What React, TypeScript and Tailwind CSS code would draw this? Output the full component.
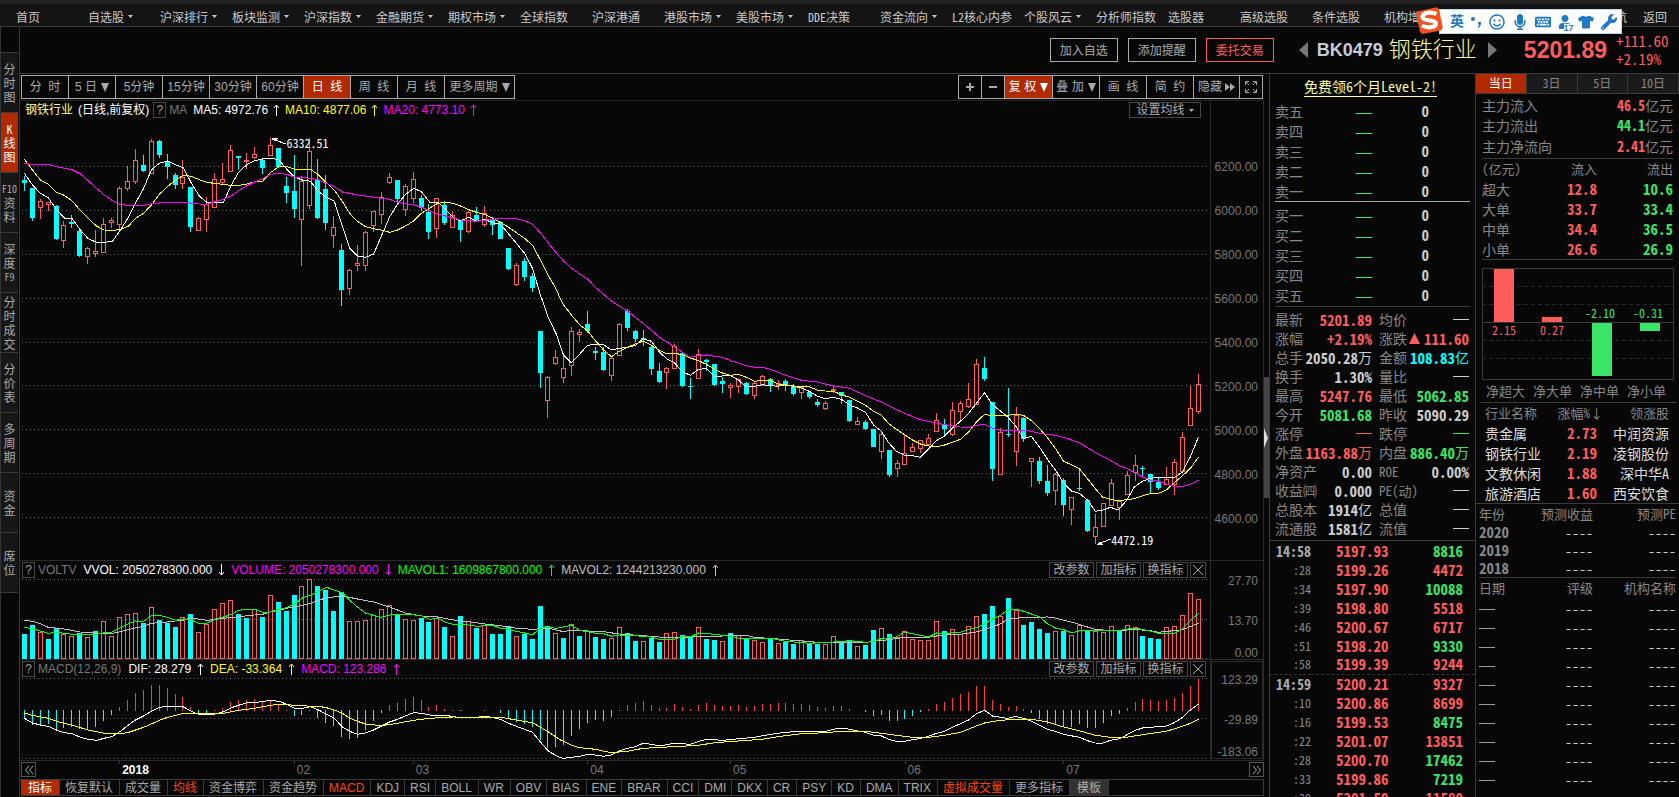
import type { ReactNode } from 'react';
import { FaKeyboard, FaMicrophone, FaRegSmile, FaTshirt, FaUser, FaWrench } from 'react-icons/fa';
import { clsx } from 'clsx';

const RED = '#ff5c5c';
const CYAN = '#00ffff';
const GREEN = '#3ae467';

const MONO = "font-['Noto_Sans_Mono_CJK_SC','Noto_Sans_CJK_SC',monospace]";
const ARIAL = "font-['Liberation_Sans','Noto_Sans_CJK_SC',sans-serif]";

// ---------- chart data ----------
// r = up, c = down, followed by high, body top, body bottom, low
const CANDLES = `
c528,540,549,573 c564,564,654,663 r598,604,620,656 r606,606,611,632 c615,618,716,720 r663,676,721,744
c646,665,672,684 c690,693,768,771 r741,744,768,791 r690,752,758,771 r654,673,757,758 r654,661,667,684
r558,563,673,687 r499,542,563,573 r448,481,542,552 c465,495,512,516 r417,424,520,522 c420,424,465,475
c462,484,500,537 c519,525,555,567 r480,531,550,567 c561,561,681,696 r651,654,691,692 r591,612,658,696
r519,538,622,624 r489,536,545,552 r436,451,514,516 c468,468,474,510 r460,480,484,508 r442,463,471,478
c476,479,504,521 r414,436,466,468 c444,444,500,503 c531,558,579,609 c465,573,627,654 r528,542,658,797
r414,454,616,627 c476,541,654,656 c525,567,669,690 r648,682,706,744 c732,750,870,918 r806,811,863,885
r735,790,795,813 r693,697,794,813 r633,634,676,696 r576,590,643,672 r519,531,546,551 c540,540,597,608
r552,557,628,648 r516,538,593,608 c585,594,625,632 c612,636,696,717 r594,595,685,714 c603,615,669,674
r633,646,682,684 c660,664,690,726 r633,637,694,700 c621,645,660,662 r618,640,673,680 c651,660,675,705
c664,666,716,717 c744,744,807,810 r789,796,851,857 c774,783,831,843 c820,828,864,876 c993,993,1118,1164
r1128,1132,1199,1254 r1050,1072,1088,1095 r1065,1105,1132,1149 r981,993,1094,1128 r987,996,1001,1026
c933,972,992,998 c1041,1053,1058,1080 c1041,1056,1109,1113 r1070,1074,1124,1143 r969,972,1064,1065
c927,933,984,993 c990,993,1016,1026 c990,1014,1017,1038 c1035,1041,1107,1125 c1089,1113,1146,1149
r1101,1105,1117,1167 r1033,1039,1105,1107 c1059,1059,1158,1161 c1134,1158,1161,1197 r1047,1063,1135,1137
c1077,1080,1086,1113 c1092,1092,1155,1158 c1131,1143,1152,1179 r1149,1155,1160,1194 r1134,1138,1157,1179
c1146,1149,1182,1185 r1143,1150,1184,1197 r1125,1129,1154,1158 c1134,1137,1158,1176 r1140,1149,1154,1170
c1137,1143,1158,1173 c1152,1158,1182,1188 r1158,1162,1175,1197 c1176,1176,1191,1197 c1197,1206,1215,1221
r1203,1210,1223,1230 r1155,1167,1169,1179 c1176,1176,1188,1212 c1200,1200,1263,1267 r1251,1264,1271,1275
c1260,1266,1287,1290 c1287,1287,1341,1341 r1296,1303,1352,1377 c1350,1350,1425,1431 r1380,1390,1403,1431
r1302,1360,1393,1395 r1329,1342,1352,1356 r1320,1321,1343,1359 r1302,1315,1331,1335 r1239,1261,1292,1293
c1257,1272,1287,1308 r1206,1231,1301,1308 r1203,1210,1232,1263 r1149,1198,1217,1224 r1077,1093,1211,1213
c1071,1104,1137,1143 c1206,1206,1407,1443 r1284,1297,1423,1425 c1164,1301,1305,1311 r1221,1244,1352,1398
c1250,1254,1317,1326 r1374,1375,1382,1461 c1371,1383,1443,1452 c1395,1443,1479,1488 r1420,1423,1469,1515
c1434,1440,1515,1548 r1490,1492,1526,1575 c1407,1464,1467,1473 c1500,1500,1593,1596 r1542,1581,1607,1631
r1509,1510,1577,1577 r1437,1450,1514,1514 r1504,1504,1522,1560 r1413,1426,1483,1485 r1365,1396,1415,1443
c1397,1405,1408,1428 c1422,1422,1446,1479 c1434,1446,1464,1470 r1401,1437,1451,1455 r1377,1387,1451,1485
r1296,1312,1412,1415 r1158,1225,1276,1278 r1122,1153,1232,1242`;

const MA5 =
    '68,520 91,555 113,580 135,593 158,628 180,654 203,657 225,690 247,716 270,727 292,727 315,724 337,690 360,651 379,610 402,565 424,510 446,490 469,483 491,494 514,504 536,550 558,588 581,609 603,608 626,606 648,555 668,517 690,495 713,482 735,477 757,475 780,479 802,506 825,532 847,540 869,544 892,575 914,592 936,604 950,650 959,680 979,744 1001,768 1023,772 1046,762 1068,708 1091,651 1113,612 1135,584 1158,565 1180,575 1203,606 1225,606 1247,627 1270,654 1289,663 1312,652 1334,664 1357,658 1379,668 1401,672 1424,702 1446,730 1469,760 1491,805 1513,885 1536,955 1558,1003 1568,1036 1578,1065 1600,1088 1623,1063 1645,1036 1667,1033 1690,1034 1712,1050 1734,1045 1757,1042 1779,1036 1801,1016 1824,1024 1846,1056 1869,1078 1888,1088 1911,1115 1933,1126 1956,1108 1978,1106 2001,1130 2023,1128 2045,1126 2067,1140 2090,1160 2112,1159 2135,1154 2177,1159 2199,1154 2222,1159 2244,1164 2266,1174 2288,1188 2311,1196 2334,1192 2356,1198 2379,1215 2401,1224 2423,1237 2446,1275 2468,1294 2488,1328 2510,1354 2533,1366 2555,1367 2577,1372 2600,1347 2622,1322 2645,1308 2667,1284 2689,1264 2712,1240 2734,1210 2757,1178 2779,1214 2821,1250 2843,1277 2866,1315 2888,1309 2910,1340 2933,1378 2955,1410 2978,1448 3000,1473 3022,1480 3045,1500 3067,1534 3087,1531 3109,1522 3131,1530 3154,1502 3176,1461 3199,1444 3221,1435 3244,1432 3266,1434 3288,1433 3311,1416 3333,1370 3356,1310';
const MA10 =
    '68,478 91,510 113,540 135,553 158,577 180,586 203,604 225,632 247,655 270,678 292,690 315,691 337,689 360,678 379,655 402,640 424,615 446,583 469,560 491,540 514,526 536,529 558,539 581,548 603,550 626,554 648,556 668,556 690,553 713,545 735,544 757,518 780,500 802,499 825,508 869,508 892,525 914,548 936,570 959,605 979,640 1001,664 1023,680 1046,686 1068,690 1091,697 1113,690 1135,678 1158,663 1180,640 1203,625 1225,610 1247,607 1270,610 1289,618 1312,629 1334,637 1357,643 1379,655 1401,667 1424,682 1446,698 1469,715 1491,736 1513,780 1536,828 1558,868 1568,895 1578,915 1600,945 1623,974 1645,992 1667,1022 1690,1050 1712,1070 1734,1054 1757,1042 1779,1032 1801,1024 1824,1036 1846,1051 1869,1062 1888,1060 1911,1064 1933,1074 1956,1082 1978,1093 2001,1108 2023,1119 2045,1126 2067,1123 2090,1132 2112,1144 2135,1141 2157,1140 2177,1152 2199,1155 2222,1158 2266,1160 2288,1170 2311,1173 2334,1174 2356,1184 2379,1192 2401,1204 2423,1216 2446,1234 2468,1246 2488,1271 2510,1288 2533,1304 2555,1320 2577,1332 2600,1338 2622,1340 2645,1335 2667,1327 2689,1318 2712,1296 2734,1266 2757,1243 2779,1248 2801,1246 2821,1246 2843,1243 2866,1246 2888,1262 2910,1285 2933,1313 2955,1345 2978,1384 3000,1394 3022,1406 3045,1436 3067,1466 3087,1491 3109,1498 3131,1503 3154,1499 3176,1496 3199,1487 3221,1481 3244,1480 3266,1470 3288,1448 3311,1427 3333,1405 3356,1371';
const MA20 =
    '68,491 91,493 135,493 158,500 203,510 225,522 247,542 270,565 292,585 315,602 337,614 360,616 402,616 424,611 469,607 514,607 558,612 581,613 603,604 626,598 648,587 668,572 690,558 713,546 735,536 757,523 780,520 802,523 825,531 869,535 892,540 914,550 936,560 959,576 1001,585 1046,592 1091,598 1113,607 1158,615 1180,621 1203,633 1225,642 1247,648 1289,660 1334,664 1379,658 1401,655 1446,656 1469,662 1491,673 1513,699 1536,730 1560,762 1578,783 1600,805 1623,822 1645,837 1667,862 1712,903 1757,934 1801,970 1846,1012 1888,1040 1911,1057 1933,1072 1956,1067 1978,1065 2023,1072 2045,1082 2067,1089 2090,1097 2112,1102 2135,1102 2157,1108 2199,1126 2244,1141 2288,1146 2334,1158 2379,1165 2423,1187 2468,1206 2510,1229 2555,1250 2577,1259 2600,1264 2645,1274 2689,1281 2712,1282 2734,1276 2757,1273 2779,1285 2801,1291 2866,1291 2888,1294 2910,1300 2955,1306 2978,1312 3000,1320 3022,1328 3067,1358 3109,1381 3136,1398 3154,1404 3176,1418 3199,1431 3221,1440 3244,1444 3266,1453 3288,1459 3311,1459 3333,1453 3356,1440';

const VOLUMES = `
c321 c294 r316 c336 c304 r322 r328 c318 r331 c312 r283 r328 r271 r262 r259 c288 r241 c279 c288 c300
r271 c261 r316 r292 r247 r229 r220 c261 c273 r247 c270 r205 c225 c252 c204 r178 r157 c177 c189 c252
c195 r283 r283 r280 r265 r247 r235 c264 r277 r280 c273 c285 r274 c300 r328 c267 r283 c303 r295 c321
c321 c298 r328 c321 c336 c237 c297 r319 c333 r292 c327 r313 c330 c336 r334 r301 c318 c342 r343 c333
c345 r319 r316 c324 c328 r301 c336 c339 r343 c318 r325 c336 r340 r346 c336 r349 c345 c351 r340 c350
c350 r352 r328 c342 c339 r358 c354 c309 r304 c321 r331 r313 r337 r340 r340 r283 c312 r307 r322 r298
r268 c261 c237 r268 c213 r250 c294 c285 c306 c318 r313 c312 r325 r295 c312 r313 r316 r298 c310 r295
r301 c327 c333 c336 r301 r298 r265 r199 r217`;

const MAVOL1 =
    '68,301 91,305 135,319 158,316 180,319 203,322 270,322 292,317 315,315 337,302 360,290 379,282 402,283 424,266 446,265 469,271 491,280 514,276 536,279 558,290 581,288 603,276 626,270 648,262 668,250 690,247 713,247 735,256 757,255 780,247 802,242 825,231 847,213 869,205 892,193 914,181 936,189 959,197 979,220 1001,240 1023,258 1046,265 1068,271 1091,264 1135,261 1180,266 1203,277 1225,274 1247,286 1270,292 1312,294 1334,298 1379,295 1401,303 1424,307 1446,313 1491,323 1513,304 1536,301 1558,304 1600,295 1623,310 1667,319 1690,320 1712,328 1734,324 1779,326 1801,328 1824,330 1846,337 1888,337 1911,328 1933,330 1956,318 2001,322 2045,328 2067,333 2157,333 2199,343 2266,349 2334,345 2379,341 2423,346 2446,344 2468,335 2510,330 2533,316 2555,320 2600,330 2622,318 2645,322 2667,316 2689,316 2712,307 2734,302 2757,290 2779,276 2801,265 2821,250 2843,246 2866,253 2910,269 2933,290 2955,303 2978,308 3000,317 3022,312 3087,310 3109,310 3136,310 3176,303 3221,312 3244,319 3288,319 3311,305 3333,280 3356,259';
const MAVOL2 =
    '68,280 91,283 113,290 135,301 180,306 225,315 270,319 315,319 337,314 379,303 402,298 424,289 469,285 514,279 536,273 581,280 626,274 668,269 713,264 735,262 757,255 780,250 802,244 847,235 869,229 892,220 914,212 959,207 1001,216 1046,225 1091,240 1135,258 1180,267 1225,270 1270,279 1312,284 1357,291 1401,296 1446,304 1491,307 1536,304 1578,314 1600,310 1690,314 1734,321 1801,326 1869,332 1933,330 2023,327 2090,325 2112,331 2177,336 2244,342 2288,346 2423,347 2446,343 2488,338 2533,331 2600,331 2645,323 2689,322 2734,315 2757,308 2779,299 2801,291 2821,277 2866,271 2933,270 2955,273 3000,285 3045,300 3067,307 3109,311 3136,311 3176,307 3221,311 3244,316 3311,308 3356,289';

const MACD_BARS = `
c576 c594 c594 c591 c606 c603 c600 c606 c606 c600 c582 c564 r540 r519 r498 r489 r474 r474 r483 r501
r510 r540 c557 c558 r549 r543 r525 r519 r519 r516 r525 r522 r531 r549 c567 c564 c551 c573 c588 c597
c630 c636 c633 c609 c582 c558 r534 r528 r516 r510 r519 r540 r534 r546 r549 c552 - - r549 -
c558 c576 c585 c591 c600 c639 c663 c660 c654 c627 c606 c588 c579 c582 c570 r549 r534 r528 r522 r534
r543 r543 r531 r540 r546 r534 r528 r534 r537 r537 r534 r540 r537 r531 r531 r528 r528 r531 r531 r534
r540 r543 r537 r537 r546 - c555 c567 c564 c582 c582 c576 c567 c555 r546 r531 r525 r513 r501 r495
r477 r477 r519 r531 r540 r537 r546 c558 c576 c591 c594 c600 c600 c591 c603 c603 c588 c567 c560 r543
r525 r516 r519 r522 r519 r513 r498 r477 r456`;

const DIF =
    '68,574 91,588 113,594 135,598 158,609 180,617 203,620 225,631 247,637 270,640 292,634 315,628 337,613 360,594 379,579 402,567 424,553 446,541 469,538 514,540 536,553 558,563 581,564 603,561 626,554 648,542 668,535 690,528 735,524 757,520 780,523 802,531 825,544 847,544 869,539 892,549 914,562 936,574 959,600 979,613 1001,622 1023,618 1046,609 1068,597 1091,585 1113,577 1135,567 1158,557 1180,559 1203,564 1247,564 1270,570 1334,571 1357,568 1379,571 1401,577 1424,589 1446,598 1491,616 1513,645 1536,673 1568,692 1578,694 1623,688 1645,682 1667,684 1690,688 1712,684 1734,672 1757,664 1779,659 1801,649 1824,652 1846,657 1888,649 1933,652 1956,643 1978,637 2023,640 2112,631 2157,622 2199,616 2244,613 2311,613 2334,607 2356,603 2379,607 2401,612 2423,616 2446,625 2468,627 2488,637 2510,643 2533,643 2577,634 2600,628 2622,619 2645,613 2667,601 2689,590 2712,579 2734,560 2757,550 2779,567 2801,571 2821,574 2843,568 2866,574 2888,583 2910,594 2933,607 2955,613 2978,622 3022,631 3045,641 3067,648 3087,649 3109,640 3136,635 3154,624 3176,611 3199,603 3266,597 3288,587 3311,571 3333,549 3356,531';
const DEA =
    '68,558 91,565 135,574 158,583 203,595 247,609 292,619 337,621 360,616 402,601 424,591 446,580 469,571 491,565 514,559 626,559 668,550 713,544 757,535 780,532 802,532 825,536 892,538 914,542 936,549 959,559 979,573 1001,583 1023,591 1068,596 1113,589 1158,580 1203,574 1270,570 1401,571 1446,579 1491,587 1513,601 1536,615 1568,638 1600,655 1623,662 1667,667 1712,677 1757,673 1801,664 1869,660 1956,655 2001,647 2067,642 2135,637 2177,629 2244,620 2311,617 2356,613 2423,613 2468,619 2510,625 2555,631 2600,631 2645,625 2689,616 2734,597 2757,588 2801,580 2843,577 2888,577 2933,585 2978,600 3022,611 3067,625 3109,631 3136,631 3154,631 3199,623 3266,613 3311,598 3333,589 3356,576';

const WIDTH = 1190;
const barX = (i: number) => Math.floor(4.3 + 7.934 * i) + 0.5;
const tokens = (s: string) => s.trim().split(/\s+/);

// series points are stored at 2.8 x 3 units per plot unit
function toPoints(series: string, offset: number) {
    return series
        .split(' ')
        .map((p) => {
            const [x, y] = p.split(',').map(Number);
            return `${(x / 2.8 - 20).toFixed(1)},${(y / 3 - offset).toFixed(1)}`;
        })
        .join(' ');
}

function Line({ series, offset, color }: { series: string; offset: number; color: string }) {
    return <polyline points={toPoints(series, offset)} fill="none" stroke={color} strokeWidth="1" />;
}

function Grid({ rows }: { rows: number[] }) {
    return (
        <>
            {rows.map((y) => (
                <line key={y} x1="2" x2={WIDTH} y1={y + 0.5} y2={y + 0.5} stroke="#5a5a5a" strokeDasharray="1 3" />
            ))}
        </>
    );
}

function Plot({ height, children }: { height: number; children: ReactNode }) {
    return (
        <svg
            className="block w-full h-full"
            viewBox={`0 0 ${WIDTH} ${height}`}
            preserveAspectRatio="none"
            shapeRendering="crispEdges"
        >
            {children}
        </svg>
    );
}

function PriceChart() {
    return (
        <Plot height={441}>
            <Grid rows={[47, 91, 135, 179, 223, 266, 310, 354, 398]} />
            {tokens(CANDLES).map((t, i) => {
                const [high, top, bottom, low] = t.slice(1).split(',').map((v) => Math.round(Number(v) / 3) - 119);
                const x = barX(i);
                const h = Math.max(bottom - top, 1);
                if (t[0] === 'c') {
                    return (
                        <g key={i} fill={CYAN}>
                            <rect x={x - 0.5} y={high} width="1" height={low - high} />
                            <rect x={x - 2.5} y={top} width="5" height={h} />
                        </g>
                    );
                }
                return (
                    <g key={i} fill="none" stroke={RED}>
                        <path d={`M${x} ${high}V${top}M${x} ${bottom}V${low}`} />
                        <rect x={x - 2} y={top + 0.5} width="4" height={h - 0.5} />
                    </g>
                );
            })}
            <Line series={MA5} offset={119} color="#ffffff" />
            <Line series={MA10} offset={119} color="#ffff00" />
            <Line series={MA20} offset={119} color="#ff00ff" />
            {/* high / low pointers */}
            <path d="M252 20l14 5M1078 425l13-5" stroke="#fff" fill="none" />
            <path d="M251 19l7 0l-3 4zM1076 426l7 0l-3 -4z" fill="#fff" />
        </Plot>
    );
}

function VolumeChart() {
    return (
        <Plot height={80}>
            <Grid rows={[0, 40, 79]} />
            {tokens(VOLUMES).map((t, i) => {
                const top = Math.round(Number(t.slice(1)) / 3) - 52;
                const x = barX(i);
                return t[0] === 'c' ? (
                    <rect key={i} x={x - 2.5} y={top} width="5" height={80 - top} fill={CYAN} />
                ) : (
                    <rect key={i} x={x - 2} y={top + 0.5} width="4" height={79 - top} fill="none" stroke={RED} />
                );
            })}
            <Line series={MAVOL2} offset={52} color="#c0c0c0" />
            <Line series={MAVOL1} offset={52} color="#00ff00" />
        </Plot>
    );
}

function MacdChart() {
    return (
        <Plot height={82}>
            <Grid rows={[0, 40, 80]} />
            {tokens(MACD_BARS).map((t, i) => {
                if (t === '-') return null;
                const end = Math.round(Number(t.slice(1)) / 3) - 151;
                const up = t[0] === 'r';
                return (
                    <rect
                        key={i}
                        x={barX(i) - 0.5}
                        y={up ? end : 32}
                        width="1"
                        height={Math.max(up ? 33 - end : end - 32, 1)}
                        fill={up ? '#ff3c3c' : CYAN}
                    />
                );
            })}
            <Line series={DIF} offset={151} color="#ffffff" />
            <Line series={DEA} offset={151} color="#ffff00" />
        </Plot>
    );
}

// ---------- small pieces ----------
function Caret() {
    return (
        <svg className="w-[5px] h-[3px] ml-1 shrink-0" viewBox="0 0 5 3" fill="currentColor">
            <path d="M0 0h5L2.5 3z" />
        </svg>
    );
}

function Triangle({ className }: { className?: string }) {
    return (
        <svg className={clsx('w-2 h-[9px] shrink-0', className)} viewBox="0 0 8 9" fill="currentColor">
            <path d="M0 0h8L4 9z" />
        </svg>
    );
}

function Arrow({ down, className = 'mx-[5px]' }: { down?: boolean; className?: string }) {
    return (
        <svg
            className={clsx('w-[7px] h-3 shrink-0', className, down && 'rotate-180')}
            viewBox="0 0 7 12"
            fill="none"
            stroke="currentColor"
        >
            <path d="M3.5 12V1M1 4l2.5-3L6 4" />
        </svg>
    );
}

function Dash({ color }: { color: string }) {
    return <span className="inline-block w-4 h-px align-middle" style={{ backgroundColor: color }} />;
}

const HELP = 'w-[13px] h-4 border border-[#444] text-[#999] text-xs leading-[14px] shrink-0';

function PaneHeader({ name, items }: { name: string; items: { text: string; color: string; down?: boolean }[] }) {
    return (
        <div className="flex items-center h-[18px] pl-[2px] pr-1 shrink-0 text-xs whitespace-nowrap">
            <button className={HELP}>?</button>
            <span className="ml-[3px] mr-[7px] text-[#777]">{name}</span>
            {items.map((it) => (
                <span key={it.text} className="flex items-center" style={{ color: it.color }}>
                    {it.text}
                    <Arrow down={it.down} className="mx-[6px]" />
                </span>
            ))}
            <div className="ml-auto flex gap-[2px] text-[#aaa]">
                {['改参数', '加指标', '换指标'].map((b) => (
                    <button key={b} className="w-[45px] h-4 border border-[#444] leading-[14px]">
                        {b}
                    </button>
                ))}
                <button aria-label="关闭" className="w-4 h-4 border border-[#444] flex items-center justify-center">
                    <svg className="w-[10px] h-[10px]" viewBox="0 0 10 10" stroke="currentColor">
                        <path d="M0 0l10 10M10 0L0 10" />
                    </svg>
                </button>
            </div>
        </div>
    );
}

// ---------- top ----------
const NAV: [string, boolean][] = [
    ['首页', false], ['自选股', true], ['沪深排行', true], ['板块监测', true], ['沪深指数', true], ['金融期货', true],
    ['期权市场', true], ['全球指数', false], ['沪深港通', false], ['港股市场', true], ['美股市场', true],
    ['DDE决策', false], ['资金流向', true], ['L2核心内参', false], ['个股风云', true], ['分析师指数', false],
    ['选股器', false], ['高级选股', false], ['条件选股', false], ['机构增仓', false],
];

function TopNav() {
    return (
        <nav className={clsx(MONO, 'flex items-center h-[27px] shrink-0 pl-4 pr-3 pt-[3px] bg-[#141414] border-t-4 border-t-[#222] border-b border-b-[#3a3a3a] text-xs text-[#c8c8c8] whitespace-nowrap')}>
            {NAV.map(([label, menu]) => (
                <a key={label} href="#" className="flex items-center w-[72px] shrink-0">
                    {label}
                    {menu && <Caret />}
                </a>
            ))}
            <a href="#" className="ml-auto">导航</a>
            <a href="#" className="ml-4">返回</a>
        </nav>
    );
}

function ImeBar() {
    return (
        <div className="absolute top-[6px] right-[57px] flex items-center">
            <svg className="w-[27px] h-[27px] -mr-1 z-10" viewBox="0 0 27 27">
                <path d="M4 4L19 .5q3-.6 4 2l3.600 17q.6 3-2 4L8 26.800q-3 .5-4-2L.4 8q-.6-3 3.600-4z" fill="#f4511e" />
                <path d="M20.500 7C15 4.500 6.500 5.500 6.500 10c0 4.600 13.500 2.400 13.500 6.800 0 4-9 4.500-14 1.700" fill="none" stroke="#fff" strokeWidth="4.200" />
            </svg>
            <div className="flex items-center justify-between w-[183px] h-[25px] mt-[3px] pl-[10px] pr-1 bg-white border border-[#bcd6ee] text-[#1f78c8] text-base">
                <span className="text-[14px] font-bold">英</span>
                <svg className="w-[10px] h-3 mr-[2px]" viewBox="0 0 10 12" fill="currentColor">
                    <circle cx="2" cy="3" r="2" />
                    <path d="M7 6h3c0 3-.5 4.500-2.500 6l-.7-.8c1-1 1.200-1.800 1.200-2.700H7z" />
                </svg>
                <FaRegSmile />
                <FaMicrophone />
                <FaKeyboard />
                <span className="relative">
                    <FaUser className="w-[14px] h-[14px]" />
                    <b className="absolute -bottom-1 left-[6px] text-[9px] leading-[9px] bg-white">17</b>
                </span>
                <FaTshirt className="w-4" />
                <FaWrench />
            </div>
        </div>
    );
}

function StockHeader() {
    const btn = 'w-[68px] h-6 border text-xs';
    return (
        <header className="flex items-center justify-end h-[47px] shrink-0 border-b border-[#3a3a3a] pr-[9px]">
            <div className={clsx(MONO, 'flex gap-[10px]')}>
                <button className={clsx(btn, 'border-[#aaa] text-[#aaa]')}>加入自选</button>
                <button className={clsx(btn, 'border-[#aaa] text-[#aaa]')}>添加提醒</button>
                <button className={clsx(btn, 'border-[#ff5c5c] text-[#ff5c5c]')}>委托交易</button>
            </div>
            <button aria-label="上一个" className="ml-[25px]">
                <svg className="w-[9px] h-4 text-[#777]" viewBox="0 0 9 16" fill="currentColor"><path d="M9 0v16L0 8z" /></svg>
            </button>
            <span className="ml-[9px] text-lg leading-6 font-bold text-[#c4ccd8]">BK0479</span>
            <h1 className="ml-[6px] text-[22px] leading-6 text-[#ffff99] font-light">钢铁行业</h1>
            <button aria-label="下一个" className="ml-[11px]">
                <svg className="w-[9px] h-4 text-[#777]" viewBox="0 0 9 16" fill="currentColor"><path d="M0 0v16l9-8z" /></svg>
            </button>
            <span className="ml-[27px] text-[23px] font-bold text-[#ff5c5c]">5201.89</span>
            <div className={clsx(MONO, 'ml-[9px] w-[54px] text-[15px] leading-[18px] text-[#ff5c5c]')}>
                <div>+111.60</div>
                <div>+2.19%</div>
            </div>
        </header>
    );
}

const SIDE = ['分时图', 'K线图', 'F10资料', '深度F9', '分时成交', '分价表', '多周期', '资金', '席位'];

function Sidebar() {
    const split = (s: string) => s.match(/[A-Z]\d+|./g) ?? [];
    return (
        <aside className={clsx(MONO, 'w-5 shrink-0 border-l border-l-[#333] border-r border-r-[#3a3a3a] pr-px pt-[25px]')}>
            {SIDE.map((s) => (
                <button
                    key={s}
                    className={clsx(
                        'flex flex-col items-center justify-center w-full h-[60px] border-t border-[#3a3a3a] text-xs leading-[14px]',
                        s === 'K线图' ? 'bg-[#b22a00] text-white' : 'bg-[#171717] text-[#aaa]',
                    )}
                >
                    {split(s).map((ch, i) => (
                        <span key={i} className={clsx(ch.length > 1 && 'text-[10px]')}>{ch}</span>
                    ))}
                </button>
            ))}
            <div className="border-t border-[#3a3a3a]" />
        </aside>
    );
}

function Toolbar() {
    const cell = 'flex items-center justify-center h-6 border border-l-0 border-[#aaa] whitespace-pre';
    return (
        <div className={clsx(ARIAL, 'flex justify-between items-center h-[27px] shrink-0 border-b border-[#222] pl-px pr-px text-xs text-[#aaa]')}>
            <div className="flex border-l border-[#aaa]">
                {['分  时', '5 日', '5分钟', '15分钟', '30分钟', '60分钟', '日  线', '周  线', '月  线'].map((t) => (
                    <button key={t} className={clsx(cell, 'w-[47px]', t === '日  线' && 'bg-[#b22a00] text-white')}>
                        {t}
                        {t === '5 日' && <Triangle className="ml-1" />}
                    </button>
                ))}
                <button className={clsx(cell, 'w-[70px]')}>
                    更多周期
                    <Triangle className="ml-1" />
                </button>
            </div>
            <div className="flex border-l border-[#aaa]">
                <button aria-label="放大" className={clsx(cell, 'w-[23px]')}>
                    <svg className="w-2 h-2" viewBox="0 0 8 8" stroke="currentColor" strokeWidth="2"><path d="M4 0v8M0 4h8" /></svg>
                </button>
                <button aria-label="缩小" className={clsx(cell, 'w-[23px]')}>
                    <svg className="w-2 h-2" viewBox="0 0 8 8" stroke="currentColor" strokeWidth="2"><path d="M0 4h8" /></svg>
                </button>
                <button className={clsx(cell, 'w-12 bg-[#b22a00] text-white')}>复 权<Triangle className="ml-1" /></button>
                <button className={clsx(cell, 'w-[47px]')}>叠 加<Triangle className="ml-1" /></button>
                <button className={clsx(cell, 'w-[47px]')}>画  线</button>
                <button className={clsx(cell, 'w-[47px]')}>简  约</button>
                <button className={clsx(cell, 'w-[46px]')}>
                    隐藏
                    <svg className="w-[10px] h-2 ml-[3px]" viewBox="0 0 10 8" fill="currentColor"><path d="M0 0l5 4-5 4zM5 0l5 4-5 4z" /></svg>
                </button>
                <button aria-label="全屏" className={clsx(cell, 'w-[23px]')}>
                    <svg className="w-3 h-3" viewBox="0 0 12 12" fill="none" stroke="currentColor">
                        <path d="M.5 4V.5H4M8 .5h3.500V4M11.500 8v3.500H8M4 11.500H.5V8M1 1l3 3M11 1L8 4M11 11L8 8M1 11l3-3" />
                    </svg>
                </button>
            </div>
        </div>
    );
}

// ---------- chart panes ----------
const AXIS = 'w-[54px] shrink-0 border-l border-r border-[#2a2a2a] pr-[5px] text-right text-xs text-[#777]';

function PricePane() {
    return (
        <section className="flex flex-1 min-h-0 border-b border-[#2a2a2a]">
            <div className="flex flex-col flex-1 min-w-0">
                <div className="flex items-center h-[18px] pl-[5px] pr-[9px] shrink-0 text-xs text-white whitespace-nowrap">
                    <span className="text-[#ffff99]">钢铁行业</span>
                    <span className="ml-[5px] mr-1">(日线,前复权)</span>
                    <button className={HELP}>?</button>
                    <span className="ml-[3px] mr-[6px] text-[#777]">MA</span>
                    MA5: 4972.76
                    <Arrow />
                    <span className="flex items-center text-[#ffff00]">MA10: 4877.06<Arrow /></span>
                    <span className="flex items-center text-[#ff00ff]">MA20: 4773.10<Arrow /></span>
                    <button className="ml-auto flex items-center justify-center w-[72px] h-4 border border-[#444] text-[#aaa]">
                        设置均线
                        <Caret />
                    </button>
                </div>
                <div className={clsx(MONO, 'relative flex-1 min-h-0 text-xs leading-3 text-white')}>
                    <PriceChart />
                    <span className="absolute left-[22.4%] top-[4%]">6332.51</span>
                    <span className="absolute left-[91.7%] top-[94%]">4472.19</span>
                </div>
            </div>
            <div className={clsx(AXIS, 'pt-11')}>
                {['6200.00', '6000.00', '5800.00', '5600.00', '5400.00', '5200.00', '5000.00', '4800.00', '4600.00'].map((v) => (
                    <div key={v} className="h-11 leading-[44px]">{v}</div>
                ))}
            </div>
        </section>
    );
}

function VolumePane() {
    return (
        <section className="flex h-[99px] shrink-0 border-b border-[#2a2a2a]">
            <div className="flex flex-col flex-1 min-w-0">
                <PaneHeader
                    name="VOLTV"
                    items={[
                        { text: 'VVOL: 2050278300.000', color: '#ffffff', down: true },
                        { text: 'VOLUME: 2050278300.000', color: '#ff00ff', down: true },
                        { text: 'MAVOL1: 1609867800.000', color: '#00ff00' },
                        { text: 'MAVOL2: 1244213230.000', color: '#c0c0c0' },
                    ]}
                />
                <div className="flex-1 min-h-0"><VolumeChart /></div>
            </div>
            <div className={clsx(AXIS, 'flex flex-col pt-3 leading-4')}>
                <span>27.70</span>
                <span className="mt-6">13.70</span>
                <span className="mt-4">0.00</span>
            </div>
        </section>
    );
}

function MacdPane() {
    return (
        <section className="flex h-[101px] shrink-0 border-b border-[#2a2a2a]">
            <div className="flex flex-col flex-1 min-w-0">
                <PaneHeader
                    name="MACD(12,26,9)"
                    items={[
                        { text: 'DIF: 28.279', color: '#ffffff' },
                        { text: 'DEA: -33.364', color: '#ffff00' },
                        { text: 'MACD: 123.286', color: '#ff00ff' },
                    ]}
                />
                <div className="flex-1 min-h-0"><MacdChart /></div>
            </div>
            <div className={clsx(AXIS, 'flex flex-col pt-3 leading-4 outline outline-[#2a2a2a] -outline-offset-2')}>
                <span>123.29</span>
                <span className="mt-6">-29.89</span>
                <span className="mt-4">-183.06</span>
            </div>
        </section>
    );
}

// label + width of the month in half bars
const MONTHS: [string, number][] = [['2018', 44], ['02', 30], ['03', 44], ['04', 36], ['05', 44], ['06', 40], ['07', 37]];

function TimeAxis() {
    const box = 'w-[15px] h-[15px] border border-[#555] flex items-center justify-center text-[#aaa]';
    return (
        <div className="flex h-[19px] shrink-0 border-b border-[#3a3a3a] text-xs text-[#777]">
            <div className="flex flex-1">
                <div className="basis-0 grow-[25] pt-px">
                    <button aria-label="向左" className={clsx(box, 'ml-px')}>
                        <svg className="w-2 h-2" viewBox="0 0 8 8" fill="none" stroke="currentColor"><path d="M4 0L.5 4 4 8M8 0L4.500 4 8 8" /></svg>
                    </button>
                </div>
                {MONTHS.map(([m, bars]) => (
                    <div key={m} className="flex basis-0" style={{ flexGrow: bars }}>
                        <i className="w-px h-[3px] bg-[#3a3a3a]" />
                        <span className={clsx('pl-[2px] leading-[18px]', m === '2018' && 'text-white font-bold')}>{m}</span>
                    </div>
                ))}
            </div>
            <div className="w-[54px] pt-px flex justify-end">
                <button aria-label="向右" className={box}>
                    <svg className="w-2 h-2" viewBox="0 0 8 8" fill="none" stroke="currentColor"><path d="M0 0l3.500 4L0 8M4 0l3.500 4L4 8" /></svg>
                </button>
            </div>
        </div>
    );
}

const TABS = [
    '指标', '恢复默认', '成交量', '均线', '资金博弈', '资金趋势', 'MACD', 'KDJ', 'RSI', 'BOLL', 'WR', 'OBV', 'BIAS', 'ENE',
    'BRAR', 'CCI', 'DMI', 'DKX', 'CR', 'PSY', 'KD', 'DMA', 'TRIX', '虚拟成交量', '更多指标', '模板',
];

function IndicatorTabs() {
    return (
        <div className="flex h-4 mb-px ml-px shrink-0 border-b border-r border-[#3a3a3a] text-xs text-[#aaa] whitespace-nowrap overflow-hidden">
            {TABS.map((t) => (
                <button
                    key={t}
                    className={clsx(
                        'h-4 border-r border-[#3a3a3a] leading-[15px]',
                        t === '指标' || t === '模板' ? 'px-[7px]' : /^[A-Z]{3}$/.test(t) ? 'px-[5px]' : 'pl-[5px] pr-[6px]',
                        t === '指标' && 'bg-[#b22a00] text-white',
                        t === '模板' && 'bg-[#333]',
                        ['均线', 'MACD', '虚拟成交量'].includes(t) && 'text-[#ff4500]',
                    )}
                >
                    {t}
                </button>
            ))}
        </div>
    );
}

// ---------- quote column ----------
const QUOTES: [string, string, string][] = [
    ['最新', '5201.89', RED], ['均价', '', '#ccc'],
    ['涨幅', '+2.19%', RED], ['涨跌', '▲111.60', RED],
    ['总手', '2050.28万', '#ccc'], ['金额', '108.83亿', CYAN],
    ['换手', '1.30%', '#ccc'], ['量比', '', '#ccc'],
    ['最高', '5247.76', RED], ['最低', '5062.85', GREEN],
    ['今开', '5081.68', GREEN], ['昨收', '5090.29', '#ccc'],
    ['涨停', '', RED], ['跌停', '', GREEN],
    ['外盘', '1163.88万', RED], ['内盘', '886.40万', GREEN],
    ['净资产', '0.00', '#ccc'], ['ROE', '0.00%', '#ccc'],
    ['收益㈣', '0.000', '#ccc'], ['PE(动)', '', '#ccc'],
    ['总股本', '1914亿', '#ccc'], ['总值', '', '#ccc'],
    ['流通股', '1581亿', '#ccc'], ['流值', '', '#ccc'],
];

const TICKS: [string, string, string, string][] = [
    ['14:58', '5197.93', '8816', GREEN], [':28', '5199.26', '4472', RED], [':34', '5197.90', '10088', GREEN],
    [':39', '5198.80', '5518', RED], [':46', '5200.67', '6717', RED], [':51', '5198.20', '9330', GREEN],
    [':58', '5199.39', '9244', RED], ['14:59', '5200.21', '9327', RED], [':10', '5200.86', '8699', RED],
    [':16', '5199.53', '8475', GREEN], [':22', '5201.07', '13851', RED], [':28', '5200.70', '17462', GREEN],
    [':33', '5199.86', '7219', GREEN], [':39', '5201.59', '11580', RED],
];

function Depth({ side, levels }: { side: string; levels: string }) {
    return (
        <table className="w-full text-[14px] text-[#888]">
            <tbody>
                {levels.split('').map((n) => (
                    <tr key={n} className="h-5 leading-5">
                        <td className="w-[60px]">{side + n}</td>
                        <td className="w-[37px] text-right leading-3"><Dash color={GREEN} /></td>
                        <td className="pr-[41px] text-right text-[15px] font-bold text-[#ccc]">0</td>
                    </tr>
                ))}
            </tbody>
        </table>
    );
}

// the trailing unit is set lighter than the number
function Num({ value }: { value: string }) {
    const m = value.match(/^(▲?)(.*?)([万亿元]*)$/);
    return (
        <>
            {m?.[1] && <svg className="inline-block w-[11px] h-[11px] mr-1" viewBox="0 0 11 11" fill="currentColor"><path d="M5.500 0L11 11H0z" /></svg>}
            <b className="text-[15px]">{m?.[2]}</b>
            {m?.[3]}
        </>
    );
}

function QuotePanel() {
    return (
        <section className={clsx(MONO, 'w-[206px] shrink-0 border-l border-[#3a3a3a] text-[14px] whitespace-nowrap overflow-hidden')}>
            <div className="h-[27px] pr-1 text-center leading-6">
                <a href="#" className="text-[#ffff99] underline underline-offset-4">免费领6个月Level-2!</a>
            </div>
            <div className="mx-[5px] border-b border-[#aaa]"><Depth side="卖" levels="五四三二一" /></div>
            <div className="mx-[5px] border-b border-[#3a3a3a] pt-[3px] pb-px"><Depth side="买" levels="一二三四五" /></div>
            <dl className="grid grid-cols-[97px_90px] gap-x-[7px] px-[5px] pt-[3px] pb-[2px] border-b border-[#3a3a3a] leading-[19px]">
                {QUOTES.map(([k, v, color]) => (
                    <div key={k} className="flex justify-between items-center h-[19px]">
                        <dt className={clsx('text-[#888]', /^[A-Z]/.test(k) && 'text-[13px]')}>{k}</dt>
                        <dd className="flex items-center" style={{ color }}>{v ? <Num value={v} /> : <Dash color={color} />}</dd>
                    </div>
                ))}
            </dl>
            <table className="w-full">
                <tbody>
                    {TICKS.map(([time, price, vol, color]) => (
                        <tr key={time + price} className={clsx('h-[19px] leading-[18px]', time === '14:59' && 'border-t border-dashed border-[#333]')}>
                            <td className={clsx('w-[41px] text-right', time.length > 3 ? 'font-bold text-[#aaa]' : 'text-xs text-[#888]')}>{time}</td>
                            <td className="pl-[25px] text-[15px] font-bold text-[#ff5c5c]">{price}</td>
                            <td className="pr-3 text-right text-[15px] font-bold" style={{ color }}>{vol}</td>
                        </tr>
                    ))}
                </tbody>
            </table>
        </section>
    );
}

// ---------- fund flow column ----------
const FLOW = [['超大', '12.8', '10.6'], ['大单', '33.7', '33.4'], ['中单', '34.4', '36.5'], ['小单', '26.6', '26.9']];
const INDUSTRY = [['贵金属', '2.73', '中润资源'], ['钢铁行业', '2.19', '凌钢股份'], ['文教休闲', '1.88', '深中华A'], ['旅游酒店', '1.60', '西安饮食']];

function FlowChart() {
    return (
        <svg className={clsx(MONO, 'block w-full text-xs')} viewBox="0 0 192 112" shapeRendering="crispEdges">
            <rect x=".5" y=".5" width="191" height="111" fill="none" stroke="#3a3a3a" />
            <path d="M0 18.500h192M0 36.500h192M0 72.500h192M0 90.500h192" stroke="#2a2a2a" strokeDasharray="4 3" />
            <path d="M0 54.500h192" stroke="#3a3a3a" />
            <rect x="12" y="1" width="20" height="53" fill={RED} />
            <rect x="60" y="49" width="20" height="5" fill={RED} />
            <rect x="110" y="55" width="20" height="53" fill={GREEN} />
            <rect x="158" y="55" width="20" height="8" fill={GREEN} />
            <g textAnchor="middle">
                <text x="22" y="67" fill={RED}>2.15</text>
                <text x="70" y="67" fill={RED}>0.27</text>
                <text x="118" y="50" fill={GREEN}>-2.10</text>
                <text x="166" y="50" fill={GREEN}>-0.31</text>
            </g>
        </svg>
    );
}

function FlowPanel() {
    const sum = 'flex items-center justify-between';
    return (
        <section className={clsx(MONO, 'w-[204px] shrink-0 border-l border-[#3a3a3a] text-[14px] text-[#888] whitespace-nowrap overflow-hidden')}>
            <div className="flex h-5 border-b border-[#3a3a3a] text-xs">
                {['当日', '3日', '5日', '10日'].map((t, i) => (
                    <button key={t} className={clsx('flex-1 border-r border-[#3a3a3a] pb-px', i === 0 ? 'bg-[#b22a00] text-white' : 'bg-[#1a1a1a]')}>{t}</button>
                ))}
            </div>
            <div className="mx-[6px] pt-px h-[65px] border-b border-[#3a3a3a]">
                <p className={clsx(sum, 'h-5')}>主力流入<span className="flex text-[#ff5c5c]"><b>46.5</b><i className="not-italic text-[#888]">亿元</i></span></p>
                <p className={clsx(sum, 'h-5')}>主力流出<span className="flex text-[#3ae467]"><b>44.1</b><i className="not-italic text-[#888]">亿元</i></span></p>
                <p className={clsx(sum, 'h-[22px]')}>主力净流向<span className="flex text-[#ff5c5c]"><b>2.41</b><i className="not-italic text-[#888]">亿元</i></span></p>
            </div>
            <table className="w-[191px] ml-[6px] border-b border-[#3a3a3a]">
                <thead>
                    <tr className="h-5 text-[13px] leading-5">
                        <th className="w-10 text-left font-normal">(亿元)</th>
                        <th className="text-right font-normal">流入</th>
                        <th className="w-[76px] text-right font-normal">流出</th>
                    </tr>
                </thead>
                <tbody>
                    {FLOW.map(([k, a, b]) => (
                        <tr key={k} className="h-5 leading-5">
                            <td>{k}</td>
                            <td className="text-right text-[15px] font-bold text-[#ff5c5c]">{a}</td>
                            <td className="text-right text-[15px] font-bold text-[#3ae467]">{b}</td>
                        </tr>
                    ))}
                </tbody>
            </table>
            <div className="mt-[8px] ml-[6px] mr-[5px]"><FlowChart /></div>
            <div className="flex items-center ml-1 mr-[2px] pl-[6px] h-[23px] border-b border-[#3a3a3a] text-[13px]">
                {['净超大', '净大单', '净中单', '净小单'].map((t) => (
                    <span key={t} className="w-[47px]">{t}</span>
                ))}
            </div>
            <table className="w-full">
                <thead>
                    <tr className="h-5 text-[13px] leading-5">
                        <th className="pl-[9px] text-left font-normal">行业名称</th>
                        <th className="text-right font-normal">涨幅%↓</th>
                        <th className="w-[76px] pr-[10px] text-right font-normal">领涨股</th>
                    </tr>
                </thead>
                <tbody className="text-[#ddd]">
                    {INDUSTRY.map(([name, pct, lead]) => (
                        <tr key={name} className="h-5 leading-5">
                            <td className="pl-[9px]">{name}</td>
                            <td className="pr-[6px] text-right text-[15px] font-bold text-[#ff5c5c]">{pct}</td>
                            <td className="pr-[10px] text-right">{lead}</td>
                        </tr>
                    ))}
                </tbody>
            </table>
            <table className="w-full border-t border-[#3a3a3a]">
                <thead>
                    <tr className="h-[19px] text-[13px] leading-[19px]">
                        <th className="pl-[3px] text-left font-normal">年份</th>
                        <th className="text-right font-normal">预测收益</th>
                        <th className="w-[86px] pr-[3px] text-right font-normal">预测PE</th>
                    </tr>
                </thead>
                <tbody>
                    {['2020', '2019', '2018'].map((y) => (
                        <tr key={y} className="h-[18px] leading-[18px]">
                            <td className="pl-[3px] text-[15px] font-bold">{y}</td>
                            <td className="text-right text-[#ccc]">----</td>
                            <td className="pr-[3px] text-right text-[#ccc]">----</td>
                        </tr>
                    ))}
                </tbody>
            </table>
            <table className="w-[197px] ml-[3px] border-t border-[#3a3a3a]">
                <thead>
                    <tr className="h-5 text-[13px] leading-5">
                        <th className="text-left font-normal">日期</th>
                        <th className="text-right font-normal">评级</th>
                        <th className="w-[83px] text-right font-normal">机构名称</th>
                    </tr>
                </thead>
                <tbody>
                    {Array.from({ length: 10 }, (_, i) => (
                        <tr key={i} className="h-[19px] leading-4 text-[#ccc]">
                            <td><Dash color="#999" /></td>
                            <td className="text-right">----</td>
                            <td className="text-right">----</td>
                        </tr>
                    ))}
                </tbody>
            </table>
        </section>
    );
}

export default function App() {
    return (
        <div className={clsx(ARIAL, 'relative flex flex-col h-screen overflow-hidden bg-[#070707]')}>
            <TopNav />
            <ImeBar />
            <div className="flex flex-1 min-h-0">
                <Sidebar />
                <div className="flex flex-col flex-1 min-w-0">
                    <StockHeader />
                    <div className="flex flex-1 min-h-0">
                        <main className="flex flex-col flex-1 min-w-0">
                            <Toolbar />
                            <PricePane />
                            <VolumePane />
                            <MacdPane />
                            <TimeAxis />
                            <IndicatorTabs />
                        </main>
                        <div className="flex items-center w-[5px] shrink-0">
                            <button aria-label="展开" className="flex items-center w-full h-[121px] mt-1 bg-[#444]">
                                <svg className="w-1 h-5" viewBox="0 0 4 20" fill="#ddd"><path d="M0 0l4 10-4 10z" /></svg>
                            </button>
                        </div>
                        <QuotePanel />
                        <FlowPanel />
                    </div>
                </div>
            </div>
        </div>
    );
}
